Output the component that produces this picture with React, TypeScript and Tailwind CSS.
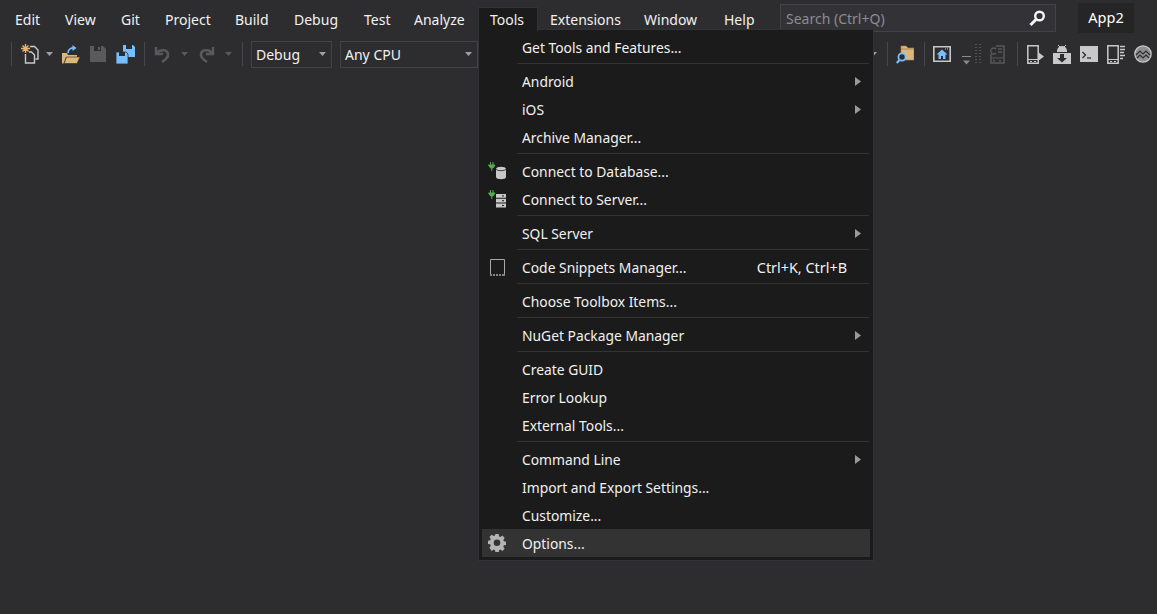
import React from 'react';

const menuNames = [
  { name: 'Edit', w: 'w-[50px]' },
  { name: 'View', w: 'w-[56px]' },
  { name: 'Git', w: 'w-[44px]' },
  { name: 'Project', w: 'w-[70px]' },
  { name: 'Build', w: 'w-[59px]' },
  { name: 'Debug', w: 'w-[70px]' },
  { name: 'Test', w: 'w-[50px]' },
  { name: 'Analyze', w: 'w-[76px]' },
];
const menuNamesAfter = [
  { name: 'Extensions', w: 'w-[94px]' },
  { name: 'Window', w: 'w-[80px]' },
  { name: 'Help', w: 'w-[56px]' },
];

function Sep({ className = '' }: { className?: string }) {
  return <div className={`w-px h-[24px] bg-[#47474b] shrink-0 ${className}`} />;
}

function Caret({ className = '', color = '#a0a0a0' }: { className?: string; color?: string }) {
  return (
    <svg width="7" height="4" viewBox="0 0 7 4" className={`shrink-0 ${className}`}>
      <path d="M0 0h7L3.500 4z" fill={color} />
    </svg>
  );
}

function NewProjectIcon() {
  return (
    <svg width="18" height="20" viewBox="0 0 18 20" className="shrink-0 ml-[9px]">
      <path d="M9 2.500h4.500l3.500 3.500v9h-2.500" fill="none" stroke="#c8c8c8" strokeWidth="1.400" />
      <path d="M4.500 10v9h9v-8l-3-3H8" fill="none" stroke="#c8c8c8" strokeWidth="1.400" />
      <path d="M4.500 0v9M0 4.500h9M1.500 1.500l6 6M7.500 1.500l-6 6" stroke="#eeb46c" strokeWidth="1.300" />
    </svg>
  );
}

function OpenIcon() {
  return (
    <svg width="18" height="19" viewBox="0 0 18 19" className="shrink-0 ml-[9px]">
      <path d="M0 8h5l1 2h9v2H4l-2.500 6.500H0z" fill="#dcb67a" />
      <path d="M4.500 12H18l-3 6.500H2z" fill="#dcb67a" stroke="#2d2d30" strokeWidth="0.600" />
      <path d="M6 8c0-4 3-5.500 7-5" fill="none" stroke="#75beff" strokeWidth="1.600" />
      <path d="M10.500 0l4 3-4 3z" fill="#75beff" />
    </svg>
  );
}

function SaveIcon() {
  return (
    <svg width="16" height="16" viewBox="0 0 16 16" className="shrink-0 ml-[10px]">
      <path d="M0 0h13l3 3v13H0z" fill="#5a5a5c" />
      <path d="M4 0h7v5H4z" fill="#2d2d30" />
      <path d="M8 1h2v3H8z" fill="#5a5a5c" />
    </svg>
  );
}

function SaveAllIcon() {
  return (
    <svg width="19" height="19" viewBox="0 0 19 19" className="shrink-0 ml-[10px]">
      <path d="M7 0h10l2 2v10H7z" fill="#75beff" />
      <path d="M10 0h6v4h-6z" fill="#2d2d30" />
      <path d="M0 7h10l2 2v10H0z" fill="#75beff" stroke="#2d2d30" strokeWidth="0.800" />
      <path d="M3 7h6v4H3z" fill="#2d2d30" />
    </svg>
  );
}

function UndoIcon({ flip = false, className = '' }: { flip?: boolean; className?: string }) {
  return (
    <svg width="17" height="19" viewBox="0 0 17 19" className={`shrink-0 ${flip ? '-scale-x-100' : ''} ${className}`}>
      <path d="M2 2v7h7" fill="none" stroke="#59595b" strokeWidth="2.400" />
      <path d="M3 8c3-4 11-4 11 2 0 3-3 5-6 7" fill="none" stroke="#59595b" strokeWidth="2.600" />
    </svg>
  );
}

function SelectBox({ label, className }: { label: string; className: string }) {
  return (
    <div className={`h-[27px] border border-[#434346] flex items-center justify-between pl-[4px] pr-[4px] shrink-0 ${className}`}>
      <span className="text-[14px] text-[#f1f1f1]">{label}</span>
      <Caret className="mr-[1px]" />
    </div>
  );
}

function FolderSearchIcon() {
  return (
    <svg width="18" height="20" viewBox="0 0 18 20" className="shrink-0 ml-[8px]">
      <path d="M5 2h5l2 2h6v12H5z" fill="#dcb67a" stroke="#a58350" strokeWidth="0.600" />
      <path d="M5 5h13" stroke="#a58350" strokeWidth="0.800" />
      <circle cx="6" cy="13" r="3.600" fill="#2d2d30" stroke="#75beff" strokeWidth="1.800" />
      <path d="M3.500 16L0.800 19" stroke="#75beff" strokeWidth="2.200" />
    </svg>
  );
}

function HomeIcon() {
  return (
    <svg width="18" height="16" viewBox="0 0 18 16" className="shrink-0 ml-[8px]">
      <path d="M0.800 0.800h16.400v14.400H0.800z" fill="#2d2d30" stroke="#c8c8c8" strokeWidth="1.600" />
      <path d="M12 3h1M14 3h1" stroke="#c8c8c8" />
      <path d="M9 3.500L3.500 8.500H5.500v4.500h2.500v-3h2v3h2.500V8.500h2z" fill="#75beff" />
    </svg>
  );
}

function LineCaretIcon() {
  return (
    <svg width="9" height="9" viewBox="0 0 9 9" className="shrink-0 ml-[11px] mt-[12px]">
      <path d="M0 0.500h9" stroke="#8a8a8a" />
      <path d="M1 4.500h7L4.500 8.500z" fill="#8a8a8a" />
    </svg>
  );
}

function DottedColumn() {
  return (
    <svg width="6" height="21" viewBox="0 0 6 21" className="shrink-0 ml-[4px]">
      <path d="M0 0.500h6M0 3.500h6M0 6.500h6M0 9.500h6M0 12.500h6M0 15.500h6M0 18.500h6" stroke="#515153" strokeWidth="1" strokeDasharray="2 2" />
    </svg>
  );
}

function DisabledPhoneIcon() {
  return (
    <svg width="15" height="19" viewBox="0 0 15 19" className="shrink-0 ml-[9px]">
      <path d="M6 1h8v17H1v-9" fill="none" stroke="#58585a" strokeWidth="1.500" />
      <path d="M1 13h13" stroke="#58585a" strokeWidth="1" />
      <path d="M3 15h2v1.500H3zM9 15h2v1.500H9z" fill="#58585a" />
      <path d="M6 4a3 3 0 1 0 0 4" fill="none" stroke="#58585a" strokeWidth="1.300" />
      <path d="M8 4h4M8 7h4" stroke="#58585a" strokeWidth="1.300" />
    </svg>
  );
}

function DevicePlayIcon() {
  return (
    <svg width="17" height="19" viewBox="0 0 17 19" className="shrink-0 ml-[9px]">
      <path d="M0.800 0.800h10.400v17.400H0.800z" fill="none" stroke="#c8c8c8" strokeWidth="1.500" />
      <path d="M1 14.500h10" stroke="#c8c8c8" />
      <path d="M3 16h2v1H3zM7 16h2v1H7z" fill="#c8c8c8" />
      <path d="M11 7l6 4.500-6 4.500z" fill="#c8c8c8" />
    </svg>
  );
}

function AndroidIcon() {
  return (
    <svg width="18" height="19" viewBox="0 0 18 19" className="shrink-0 ml-[9px]">
      <path d="M4 6a5 5 0 0 1 10 0v1H4z" fill="#c8c8c8" />
      <path d="M5 0l2 2M13 0l-2 2" stroke="#c8c8c8" />
      <path d="M0 8h18v11H0z" fill="#c8c8c8" />
      <path d="M7 9h4v4h3l-5 4.500L4 13h3z" fill="#2d2d30" />
    </svg>
  );
}

function TerminalIcon() {
  return (
    <svg width="18" height="16" viewBox="0 0 18 16" className="shrink-0 ml-[9px]">
      <path d="M0 0h18v16H0z" fill="#c8c8c8" />
      <path d="M2.500 6l3 3-3 3" fill="none" stroke="#2d2d30" strokeWidth="1.300" />
      <path d="M7 12h4" stroke="#2d2d30" strokeWidth="1.300" />
    </svg>
  );
}

function DeviceListIcon() {
  return (
    <svg width="18" height="19" viewBox="0 0 18 19" className="shrink-0 ml-[9px]">
      <path d="M0.800 0.800h10.400v17.400H0.800z" fill="none" stroke="#c8c8c8" strokeWidth="1.500" />
      <path d="M1 14.500h10" stroke="#c8c8c8" />
      <path d="M3 16h2v1H3zM7 16h2v1H7z" fill="#c8c8c8" />
      <path d="M13 1.500h5M13 4.500h5M13 7.500h4M13 10.500h5M13 13.500h3" stroke="#c8c8c8" strokeWidth="1.600" />
    </svg>
  );
}

function CircleIcon() {
  return (
    <svg width="18" height="18" viewBox="0 0 18 18" className="shrink-0 ml-[9px]">
      <circle cx="9" cy="9" r="8.200" fill="#8f8f90" stroke="#c8c8c8" strokeWidth="1.200" />
      <path d="M2 10l4-4 3 3 3-3 4 4M3 13l3-3 3 3 3-3 3 3" fill="none" stroke="#2d2d30" strokeWidth="1.200" />
    </svg>
  );
}

function DatabaseIcon() {
  return (
    <svg width="19" height="18" viewBox="0 0 19 18">
      <path d="M2.500 0v3M5 0v3M0.500 3h6.500L5 6H2.500zM3.800 6v3" fill="#54a850" stroke="#54a850" strokeWidth="1" />
      <path d="M8 7c0-3 10-3 10 0v8c0 3-10 3-10 0z" fill="#c8c8c8" />
      <path d="M8 7c0 2.200 10 2.200 10 0" fill="none" stroke="#1b1b1c" strokeWidth="0.800" />
    </svg>
  );
}

function ServerIcon() {
  return (
    <svg width="19" height="18" viewBox="0 0 19 18">
      <path d="M2.500 0v3M5 0v3M0.500 3h6.500L5 6H2.500zM3.800 6v3" fill="#54a850" stroke="#54a850" strokeWidth="1" />
      <path d="M8 4h10v3.800H8zM8 8.800h10v3.800H8zM8 13.600h10v3.800H8z" fill="#c8c8c8" />
      <path d="M14 5.900h2M14 10.700h2M14 15.500h2" stroke="#1b1b1c" />
    </svg>
  );
}

function SnippetIcon() {
  return (
    <svg width="15" height="17" viewBox="0 0 15 17">
      <path d="M0.500 15V0.500h14V15" fill="none" stroke="#a8a8a8" strokeWidth="1" />
      <path d="M0 16h2M3 16h2M6 16h2M9 16h2M12 16h3" stroke="#a8a8a8" strokeWidth="1.400" />
    </svg>
  );
}

function GearIcon() {
  return (
    <svg width="18" height="18" viewBox="0 0 18 18">
      <path
        d="M7.300 0h3.400l.5 2.500 1.300.6 2.200-1.400 2.300 2.400-1.400 2.100.6 1.400 2.500.5v3.300l-2.500.5-.6 1.400 1.400 2.100-2.300 2.400-2.200-1.400-1.300.6-.5 2.500H7.300l-.5-2.500-1.300-.6-2.200 1.400L1 14.400l1.400-2.100-.6-1.400-2.500-.5V7.100l2.500-.5.6-1.400L1 3.100l2.300-2.400 2.200 1.400 1.300-.6z"
        fill="#b4b4b4"
        transform="translate(0.500 0) scale(0.950)"
      />
      <circle cx="9" cy="8.800" r="3.300" fill="#333334" />
    </svg>
  );
}

type Row = { label: string; sub?: boolean; shortcut?: string; icon?: React.ReactNode; active?: boolean };

const menuGroups: Row[][] = [
  [{ label: 'Get Tools and Features...' }],
  [{ label: 'Android', sub: true }, { label: 'iOS', sub: true }, { label: 'Archive Manager...' }],
  [
    { label: 'Connect to Database...', icon: <DatabaseIcon /> },
    { label: 'Connect to Server...', icon: <ServerIcon /> },
  ],
  [{ label: 'SQL Server', sub: true }],
  [{ label: 'Code Snippets Manager...', shortcut: 'Ctrl+K, Ctrl+B', icon: <SnippetIcon /> }],
  [{ label: 'Choose Toolbox Items...' }],
  [{ label: 'NuGet Package Manager', sub: true }],
  [{ label: 'Create GUID' }, { label: 'Error Lookup' }, { label: 'External Tools...' }],
  [
    { label: 'Command Line', sub: true },
    { label: 'Import and Export Settings...' },
    { label: 'Customize...' },
    { label: 'Options...', icon: <GearIcon />, active: true },
  ],
];

function MenuRow({ row }: { row: Row }) {
  return (
    <div className={`h-[28px] flex items-center ${row.active ? 'bg-[#333334]' : ''}`}>
      <div className="w-[40px] pr-[10px] flex items-center justify-center shrink-0">{row.icon}</div>
      <span className="pt-[2px] text-[13.85px] text-[#f1f1f1] whitespace-nowrap">{row.label}</span>
      {row.shortcut && <span className="pt-[2px] ml-auto mr-[23px] text-[14.4px] text-[#f1f1f1] whitespace-nowrap">{row.shortcut}</span>}
      {row.sub && (
        <svg width="6" height="9" viewBox="0 0 6 9" className="ml-auto mr-[9px]">
          <path d="M0 0l6 4.500L0 9z" fill="#9a9a9a" />
        </svg>
      )}
    </div>
  );
}

function ToolsMenu() {
  return (
    <div className="absolute left-[478px] top-[29px] w-[396px] bg-[#1b1b1c] border border-[#333337] p-[3px] z-10">
      {menuGroups.map((group, i) => (
        <div key={i}>
          {i > 0 && (
            <div className="h-[6px] pl-[35px] pr-[1px] pt-[2px]">
              <div className="h-px bg-[#333337]" />
            </div>
          )}
          {group.map((row) => (
            <MenuRow key={row.label} row={row} />
          ))}
        </div>
      ))}
    </div>
  );
}

export default function App() {
  return (
    <div className="relative w-[1157px] h-[614px] overflow-hidden bg-[#2d2d30] font-['Noto_Sans',sans-serif]">
      <div className="h-[38px] flex items-center pl-[3px]">
        {menuNames.map((m) => (
          <div key={m.name} className={`h-[22px] pl-[12px] flex items-center text-[14px] text-[#f1f1f1] ${m.w}`}>
            {m.name}
          </div>
        ))}
        <div className="relative z-20 w-[60px] h-[24px] pl-[11px] flex items-center text-[14px] text-[#f1f1f1] bg-[#1b1b1c] border border-b-0 border-[#333337]">
          Tools
        </div>
        {menuNamesAfter.map((m) => (
          <div key={m.name} className={`h-[22px] pl-[12px] flex items-center text-[14px] text-[#f1f1f1] ${m.w}`}>
            {m.name}
          </div>
        ))}
        <div className="ml-auto mb-[2px] w-[276px] h-[28px] border border-[#434346] bg-[#333337] flex items-center justify-between pl-[5px] pr-[9px]">
          <span className="text-[14px] text-[#8c8c8e]">Search (Ctrl+Q)</span>
          <svg width="17" height="17" viewBox="0 0 17 17">
            <circle cx="10.500" cy="6" r="4.300" fill="none" stroke="#f5f5f5" strokeWidth="2.400" />
            <path d="M7 9.500L1.500 15" stroke="#f5f5f5" strokeWidth="3" />
          </svg>
        </div>
        <div className="ml-[22px] mr-[23px] mb-[2px] w-[56px] h-[30px] bg-[#252526] flex items-center justify-center text-[14.500px] text-white">
          App2
        </div>
      </div>

      <div className="h-[32px] flex items-center pl-[11px] pr-[5px]">
        <Sep />
        <NewProjectIcon />
        <Caret className="ml-[7px]" />
        <OpenIcon />
        <SaveIcon />
        <SaveAllIcon />
        <Sep className="ml-[9px]" />
        <UndoIcon className="ml-[9px]" />
        <Caret className="ml-[10px]" color="#59595b" />
        <UndoIcon flip className="ml-[10px]" />
        <Caret className="ml-[10px]" color="#59595b" />
        <Sep className="ml-[10px]" />
        <SelectBox label="Debug" className="ml-[8px] w-[81px]" />
        <SelectBox label="Any CPU" className="ml-[8px] w-[138px]" />

        <Caret className="ml-auto" />
        <Sep className="ml-[10px]" />
        <FolderSearchIcon />
        <Sep className="ml-[10px]" />
        <HomeIcon />
        <LineCaretIcon />
        <DottedColumn />
        <DisabledPhoneIcon />
        <Sep className="ml-[12px]" />
        <DevicePlayIcon />
        <AndroidIcon />
        <TerminalIcon />
        <DeviceListIcon />
        <CircleIcon />
      </div>

      <ToolsMenu />
    </div>
  );
}
